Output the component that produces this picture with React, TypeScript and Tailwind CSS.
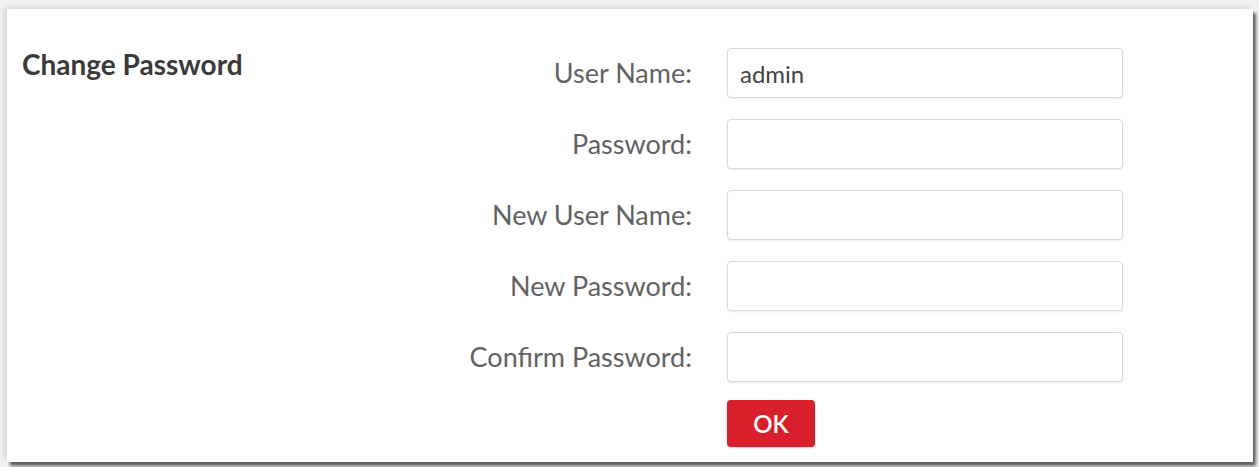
import React from 'react';

const rows = [
  { label: 'User Name:', value: 'admin' },
  { label: 'Password:', value: '' },
  { label: 'New User Name:', value: '' },
  { label: 'New Password:', value: '' },
  { label: 'Confirm Password:', value: '' },
];

export default function App() {
  return (
    <div className="w-[1259px] h-[467px] overflow-hidden bg-[#f2f2f2] pt-[9px] pl-[7px]" style={{ fontFamily: 'Lato, "Open Sans", sans-serif' }}>
      <div className="w-[1246px] h-[453px] bg-white shadow-[-3px_-2px_6px_rgba(0,0,0,0.12),3px_4px_3px_rgba(0,0,0,0.6)] flex items-start pl-[15px] pt-[39px]">
        <div className="w-[300px] -mt-[2px]">
          <h1 className="text-[28px] font-bold text-[#3a3a3a] leading-[36px]">Change Password</h1>
        </div>
        <form className="grid grid-cols-[370px_396px] gap-x-[35px] gap-y-[21px] items-center content-start" onSubmit={(e) => e.preventDefault()}>
          {rows.map((r) => (
            <React.Fragment key={r.label}>
              <label className="text-right text-[27px] leading-[32px] text-[#626262]">{r.label}</label>
              <input
                type="text"
                defaultValue={r.value}
                className="h-[50px] rounded-[4px] border border-[#d9d9d9] bg-white px-[12px] text-[24px] text-[#444] shadow-[0_1px_2px_rgba(0,0,0,0.08)] outline-none"
              />
            </React.Fragment>
          ))}
          <div className="-mt-[3px]" />
          <div className="-mt-[3px]">
            <button type="submit" className="h-[47px] w-[88px] rounded-[4px] bg-[#d7202c] text-[24px] font-semibold text-white shadow-[0_1px_2px_rgba(0,0,0,0.2)]">
              OK
            </button>
          </div>
        </form>
      </div>
    </div>
  );
}
